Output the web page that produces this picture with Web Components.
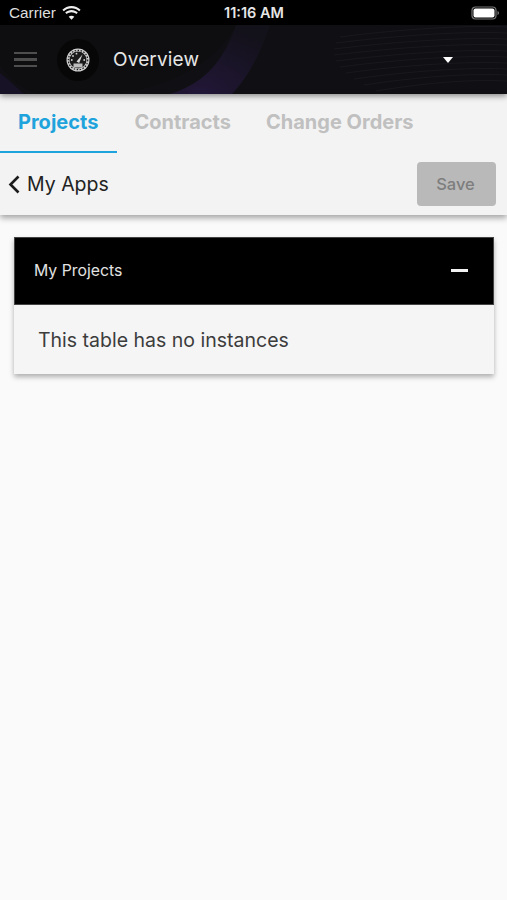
<!DOCTYPE html>
<html>
<head>
<meta charset="utf-8">
<title>Overview</title>
<style>
  html, body { margin: 0; padding: 0; height: 100%; background: #fafafa; font-family: Inter, "Liberation Sans", sans-serif; }
  body { display: flex; flex-direction: column; height: 900px; overflow: hidden; }
</style>
</head>
<body>
<app-status-bar></app-status-bar>
<app-header title="Overview"></app-header>
<app-toolbar>
  <tab-item slot="tabs" active>Projects</tab-item>
  <tab-item slot="tabs">Contracts</tab-item>
  <tab-item slot="tabs">Change Orders</tab-item>
</app-toolbar>
<collapse-card heading="My Projects">This table has no instances</collapse-card>

<script>
class AppStatusBar extends HTMLElement {
  connectedCallback() {
    const root = this.attachShadow({ mode: 'open' });
    root.innerHTML = `
      <style>
        :host { display: flex; flex: none; height: 25px; background: #000; color: #dedede; font: 400 15.300px "Liberation Sans", Arial, sans-serif; }
        .bar { flex: 1; display: grid; grid-template-columns: 1fr auto 1fr; align-items: center; padding: 0 7px 0 9px; height: 27px; margin-top: -1px; }
        .left { display: flex; align-items: center; gap: 6px; }
        .right { display: flex; justify-content: flex-end; }
        .time { font: 600 14.500px Inter, sans-serif; color: #e6e6e6; margin-right: 1px; }
        svg { display: block; }
      </style>
      <div class="bar">
        <div class="left">
          <span>Carrier</span>
          <svg width="19" height="14" viewBox="0 0 19 14" fill="#eee">
            <path d="M9.500 2.200c3 0 5.700 1.200 7.700 3.100l1.400-1.500C16.200 1.500 13 0 9.500 0S2.800 1.500.4 3.800l1.400 1.500c2-1.900 4.700-3.100 7.700-3.100z"/>
            <path d="M9.500 6.200c1.900 0 3.600.7 4.900 1.900l1.400-1.500c-1.700-1.500-3.900-2.500-6.300-2.500s-4.600 1-6.300 2.500l1.400 1.500c1.300-1.200 3-1.900 4.900-1.900z"/>
            <path d="M9.500 9.700c-1.100 0-2.100.4-2.800 1.100l2.800 2.900 2.800-2.900c-.7-.7-1.700-1.100-2.800-1.100z"/>
          </svg>
        </div>
        <span class="time">11:16 AM</span>
        <div class="right">
          <svg width="29" height="14" viewBox="0 0 29 14">
            <rect x="1" y="1" width="24" height="12" rx="3.500" fill="none" stroke="#777" stroke-width="1.200"/>
            <rect x="2.500" y="2.500" width="21" height="9" rx="2" fill="#fff"/>
            <path d="M26.500 5v4c.9-.3 1.500-1.100 1.500-2s-.6-1.700-1.500-2z" fill="#777"/>
          </svg>
        </div>
      </div>`;
  }
}

class AppHeader extends HTMLElement {
  connectedCallback() {
    const root = this.attachShadow({ mode: 'open' });
    const title = this.getAttribute('title') || '';
    root.innerHTML = `
      <style>
        :host { display: block; flex: none; height: 69px; position: relative; z-index: 2; box-shadow: 0 2px 6px rgba(0,0,0,.45); background: #101014; overflow: hidden; }
        .art { position: absolute; inset: 0; width: 100%; height: 100%; }
        .row { position: relative; height: 100%; display: flex; align-items: center; box-sizing: border-box; padding: 0 0 0 14px; }
        .burger { width: 23px; display: flex; flex-direction: column; gap: 4px; }
        .burger i { height: 2.500px; background: #4e4e4e; display: block; }
        .logo { width: 42px; height: 42px; margin-left: 20px; border-radius: 50%; background: #070707; display: flex; align-items: center; justify-content: center; }
        .name { margin-left: 14px; color: #e6e6e6; font-size: 19px; letter-spacing: .15px; }
        .caret { position: absolute; left: 443px; top: 32px; width: 0; height: 0; border-left: 5.500px solid transparent; border-right: 5.500px solid transparent; border-top: 6px solid #fff; }
      </style>
      <svg class="art" viewBox="0 0 507 69" preserveAspectRatio="none">
        <defs>
          <radialGradient id="v" cx=".3" cy="1" r="1">
            <stop offset="0" stop-color="#221738"/><stop offset="1" stop-color="#13111a"/>
          </radialGradient>
        </defs>
        <rect width="507" height="69" fill="#101014"/>
        <path d="M0 48C10 56 18 64 24 69H0z" fill="#171226"/>
        <path d="M236 0C226 30 208 58 170 69H232C250 50 262 24 270 0z" fill="url(#v)"/>
        <path d="M40 69C110 80 205 60 236 0H0V40C10 55 25 66 40 69z" fill="#0e0e10"/>
        <g fill="none" stroke="#1f1f24" stroke-width=".6">
          <path d="M340 12C400 4 470 0 507 2"/><path d="M336 18C400 10 470 6 507 8"/>
          <path d="M334 24C400 16 470 12 507 14"/><path d="M334 30C400 22 470 18 507 20"/>
          <path d="M336 36C400 28 470 24 507 26"/><path d="M340 42C400 34 470 30 507 32"/>
          <path d="M346 48C404 40 470 36 507 38"/><path d="M354 54C410 46 470 42 507 44"/>
          <path d="M364 60C416 52 470 48 507 50"/><path d="M376 66C424 58 470 54 507 56"/>
        </g>
      </svg>
      <div class="row">
        <div class="burger"><i></i><i></i><i></i></div>
        <div class="logo">
          <svg width="24" height="24" viewBox="0 0 24 24">
            <circle cx="12" cy="12" r="11.500" fill="#cfcfcf"/>
            <circle cx="12" cy="12" r="8.500" fill="#1a1a1a"/>
            <circle cx="12" cy="12" r="9.700" fill="none" stroke="#1a1a1a" stroke-width="1.200" stroke-dasharray="1.500 1.500"/>
            <path d="M10.500 13.500L16.500 6.500L13.200 15z" fill="#d8d8d8"/>
            <rect x="7.500" y="15.500" width="9" height="4" fill="#bdbdbd"/>
            <g fill="#d0d0d0"><circle cx="5.800" cy="12" r=".9"/><circle cx="7" cy="8" r=".9"/><circle cx="10.500" cy="5.700" r=".9"/><circle cx="18.200" cy="12" r=".9"/></g>
          </svg>
        </div>
        <span class="name">${title}</span>
        <span class="caret"></span>
      </div>`;
  }
}

class TabItem extends HTMLElement {
  connectedCallback() {
    const root = this.attachShadow({ mode: 'open' });
    root.innerHTML = `
      <style>
        :host { display: block; box-sizing: border-box; height: 59px; padding: 16px 17.500px 0; font-size: 20px; line-height: 25px; font-weight: 700; color: #c0c0c0; border-bottom: 2px solid transparent; white-space: nowrap; }
        :host([active]) { width: 117px; padding-left: 18px; color: #1fa3dc; border-bottom-color: #1fa3dc; }
      </style>
      <slot></slot>`;
  }
}

class AppToolbar extends HTMLElement {
  connectedCallback() {
    const root = this.attachShadow({ mode: 'open' });
    root.innerHTML = `
      <style>
        :host { display: block; flex: none; background: #f3f3f3; box-shadow: 0 3px 6px rgba(0,0,0,.35); position: relative; z-index: 1; }
        .tabs { display: flex; }
        .actions { height: 62px; display: flex; align-items: center; justify-content: space-between; padding: 0 11px 0 8px; }
        .back { display: flex; align-items: center; gap: 7px; font-size: 19.500px; color: #222; }
        svg { display: block; }
        .save { width: 79px; height: 44px; box-sizing: border-box; padding-right: 2px; border-radius: 4px; background: #b9b9b9; color: #7e7e7e; font: 500 16.500px Inter, sans-serif; display: flex; align-items: center; justify-content: center; }
      </style>
      <div class="tabs"><slot name="tabs"></slot></div>
      <div class="actions">
        <div class="back">
          <svg width="12" height="19" viewBox="0 0 12 19" fill="none" stroke="#1c1c1c" stroke-width="2.600"><path d="M10.500 1.500L2.500 9.500L10.500 17.500"/></svg>
          <span>My Apps</span>
        </div>
        <div class="save">Save</div>
      </div>`;
  }
}

class CollapseCard extends HTMLElement {
  connectedCallback() {
    const root = this.attachShadow({ mode: 'open' });
    root.innerHTML = `
      <style>
        :host { display: block; flex: none; margin: 22px 13px 0 14px; background: #f5f5f5; box-shadow: 0 3px 5px rgba(0,0,0,.3); }
        .head { height: 68px; box-sizing: border-box; background: #000; border: 1px solid #444; display: flex; align-items: center; justify-content: space-between; padding: 0 25px 2px 19px; color: #e2e2e2; font-size: 15.800px; }
        .dash { width: 17px; height: 3px; background: #f2f2f2; }
        .body { height: 69px; display: flex; align-items: center; padding: 0 24px; font-size: 19.500px; color: #3c3c3c; }
      </style>
      <div class="head"><span>${this.getAttribute('heading') || ''}</span><span class="dash"></span></div>
      <div class="body"><slot></slot></div>`;
  }
}

customElements.define('app-status-bar', AppStatusBar);
customElements.define('app-header', AppHeader);
customElements.define('tab-item', TabItem);
customElements.define('app-toolbar', AppToolbar);
customElements.define('collapse-card', CollapseCard);
</script>
</body>
</html>
